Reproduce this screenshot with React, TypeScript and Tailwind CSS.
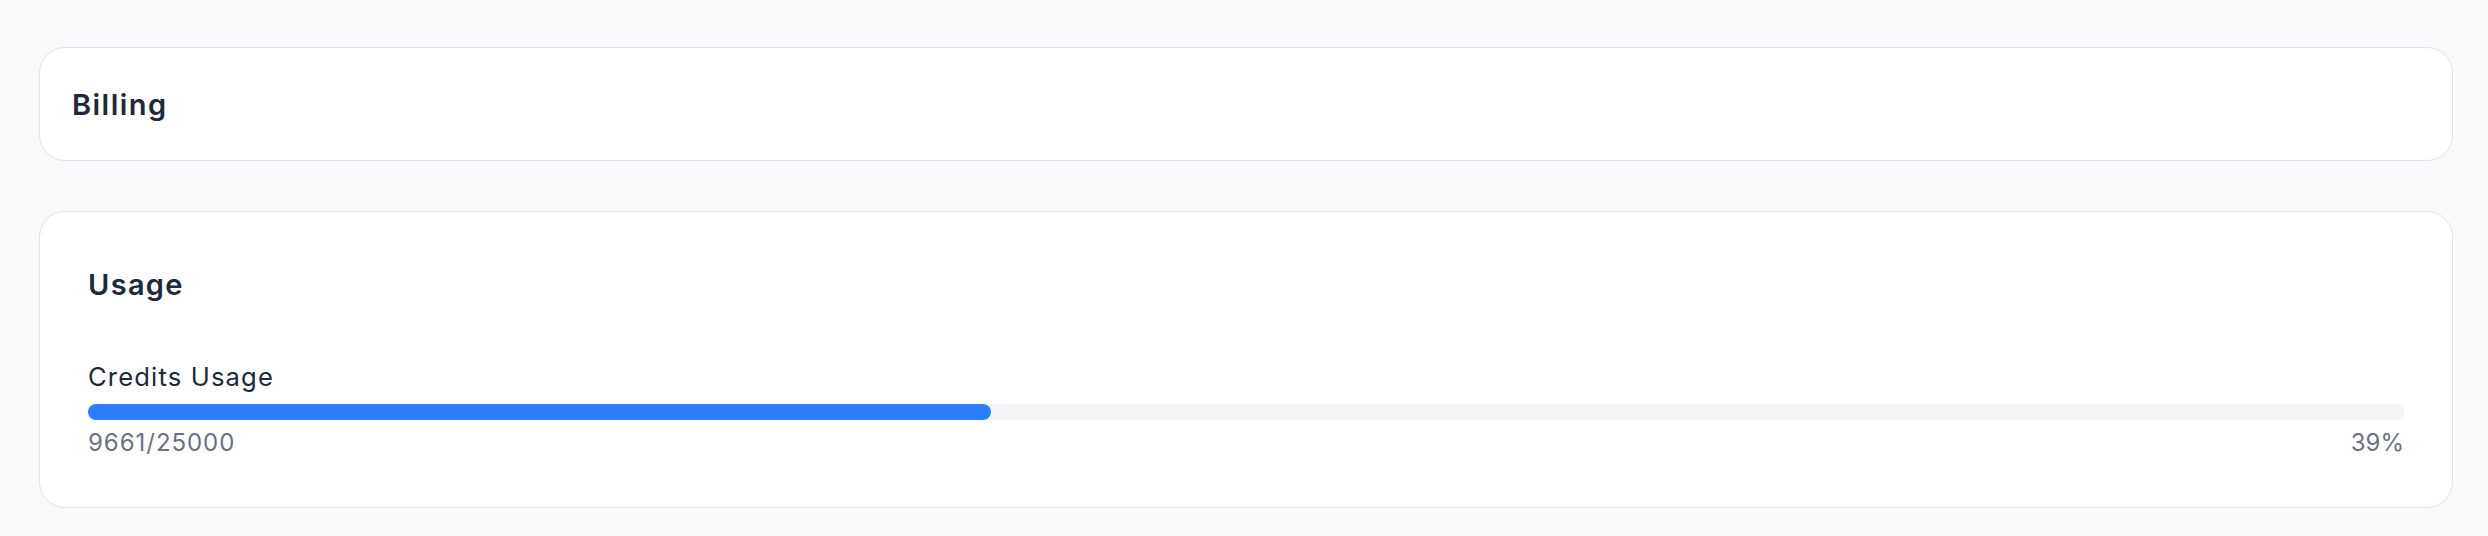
export default function App() {
  const used = 9661;
  const total = 25000;
  const pct = Math.round((used / total) * 100);

  return (
    <div
      className="min-h-[536px] w-full bg-gray-50 pl-[39px] pr-[35px] pt-[47px] pb-[28px]"
      style={{ fontFamily: "Inter, 'Noto Sans', sans-serif" }}
    >
      <div className="flex flex-col gap-[50px]">
        <div className="flex h-[114px] items-center rounded-[26px] border border-[#e2e4ea] bg-white px-[32px]">
          <h2 className="text-[29px] font-semibold leading-[45px] tracking-[0.05em] text-gray-800">Billing</h2>
        </div>

        <div className="rounded-[26px] border border-[#e2e4ea] bg-white px-[48px] pt-[50px] pb-[46px]">
          <h2 className="text-[29px] font-semibold leading-[45px] tracking-[0.045em] text-gray-800">Usage</h2>
          <div className="mt-[51px]">
            <div className="text-[25.6px] leading-[38px] tracking-[0.045em] text-gray-800">Credits Usage</div>
            <div className="mt-[8px] h-[16px] w-full rounded-full bg-gray-100">
              <div className="h-full rounded-full bg-blue-500" style={{ width: `${pct}%` }} />
            </div>
            <div className="mt-[5px] flex justify-between text-[24px] leading-[36px] text-gray-500">
              <span className="tracking-[0.04em]">
                {used}/{total}
              </span>
              <span>{pct}%</span>
            </div>
          </div>
        </div>
      </div>
    </div>
  );
}
